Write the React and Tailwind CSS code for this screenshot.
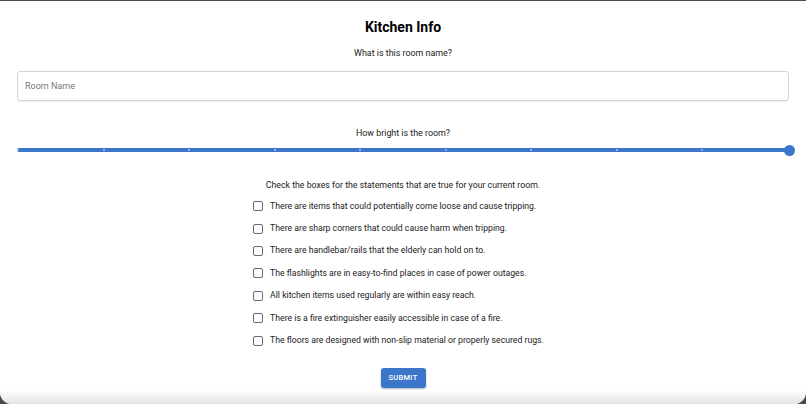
const statements = [
  'There are items that could potentially come loose and cause tripping.',
  'There are sharp corners that could cause harm when tripping.',
  'There are handlebar/rails that the elderly can hold on to.',
  'The flashlights are in easy-to-find places in case of power outages.',
  'All kitchen items used regularly are within easy reach.',
  'There is a fire extinguisher easily accessible in case of a fire.',
  'The floors are designed with non-slip material or properly secured rugs.',
];

const ticks = Array.from({ length: 10 }, (_, i) => i);

export default function App() {
  return (
    <div className="h-[404px] overflow-hidden bg-[#4a4a4a] pt-px">
      <div className="flex h-[403px] flex-col items-center rounded-b-[12px] bg-white font-['Roboto',sans-serif] text-[#222]">
        <h1 className="mt-[16px] text-[14px] font-bold leading-[20px] text-black">Kitchen Info</h1>
        <p className="mt-[10px] text-[8.9px] leading-[12px]">What is this room name?</p>

        <input
          type="text"
          placeholder="Room Name"
          className="mt-[12px] h-[30px] w-[772px] rounded-[3px] border border-[#d4d4d4] px-[7px] text-[9px] shadow-[0_1px_1px_rgba(0,0,0,0.06)] outline-none placeholder:text-[#777]"
        />

        <p className="mt-[26px] text-[8.9px] leading-[12px]">How bright is the room?</p>

        <div className="relative mt-[5px] flex h-[12px] w-[772px] items-center">
          <div className="flex h-[4px] w-full items-center justify-between rounded-full bg-[#3b76cb]">
            {ticks.map((t) => (
              <span key={t} className="h-[2px] w-[2px] rounded-full bg-[#a9c4ec]" />
            ))}
          </div>
          <span className="absolute right-[-5.5px] top-[0.5px] h-[11px] w-[11px] rounded-full bg-[#3b76cb]" />
        </div>

        <p className="mt-[23px] text-[8.75px] leading-[12px]">
          Check the boxes for the statements that are true for your current room.
        </p>

        <div className="mr-[9px] mt-[4px] flex flex-col">
          {statements.map((s) => (
            <label key={s} className="flex h-[22.4px] items-center text-[8.7px]">
              <span className="mr-[7px] h-[10px] w-[10px] rounded-[2px] border-[1.5px] border-[#6a6a6a]" />
              {s}
            </label>
          ))}
        </div>

        <button className="mt-[16px] h-[20px] w-[45px] rounded-[3px] bg-[#3b76cb] text-[7.5px] font-medium tracking-[0.3px] text-white shadow-[0_1px_2px_rgba(0,0,0,0.3)]">
          SUBMIT
        </button>

        <div className="mt-auto h-[14px] w-full rounded-b-[12px] bg-gradient-to-b from-white to-[#e4e4e4]" />
      </div>
    </div>
  );
}
